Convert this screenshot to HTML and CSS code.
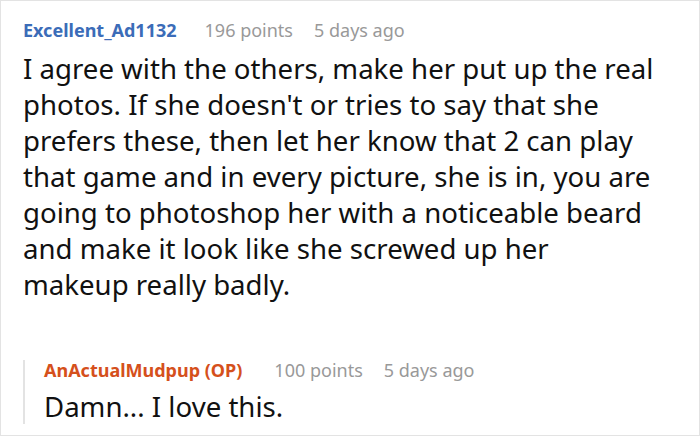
FILE: index.html
```html
<!DOCTYPE html>
<html>
<head>
<meta charset="utf-8">
<link rel="stylesheet" href="styles.css">
</head>
<body>
<div class="card">
  <div class="comment">
    <div class="meta">
      <span class="author">Excellent_Ad1132</span>
      <span class="points">196 points</span>
      <span class="time">5 days ago</span>
    </div>
    <p class="text">I agree with the others, make her put up the real photos. If she doesn't or tries to say that she prefers these, then let her know that 2 can play that game and in every picture, she is in, you are going to photoshop her with a noticeable beard and make it look like she screwed up her makeup really badly.</p>
    <div class="reply">
      <div class="meta">
        <span class="author op">AnActualMudpup (OP)</span>
        <span class="points">100 points</span>
        <span class="time">5 days ago</span>
      </div>
      <p class="text">Damn... I love this.</p>
    </div>
  </div>
</div>
</body>
</html>
```

FILE: styles.css
```css
html, body {
  margin: 0;
  padding: 0;
  background: #fff;
}
.card {
  box-sizing: border-box;
  width: 700px;
  height: 436px;
  border: 1px solid #e3e3e3;
  font-family: "Noto Sans", sans-serif;
  overflow: hidden;
}
.comment {
  padding: 15px 42px 0 22px;
}
.meta {
  display: flex;
  align-items: baseline;
  font-size: 18px;
  line-height: 28px;
  white-space: nowrap;
}
.author {
  font-weight: bold;
  color: #3b6cb8;
  margin-right: 28px;
}
.author.op {
  color: #d5501c;
  margin-right: 32px;
}
.points {
  color: #999;
  margin-right: 21px;
}
.time {
  color: #999;
}
.text {
  margin: 6px 0 0;
  font-size: 27.6px;
  line-height: 36px;
  color: #111;
}
.reply {
  margin-top: 58px;
  border-left: 2px solid #e3e3e3;
  padding-left: 19px;
}
.reply .meta {
  line-height: 20px;
}
.reply .text {
  margin-top: 8px;
}
```
